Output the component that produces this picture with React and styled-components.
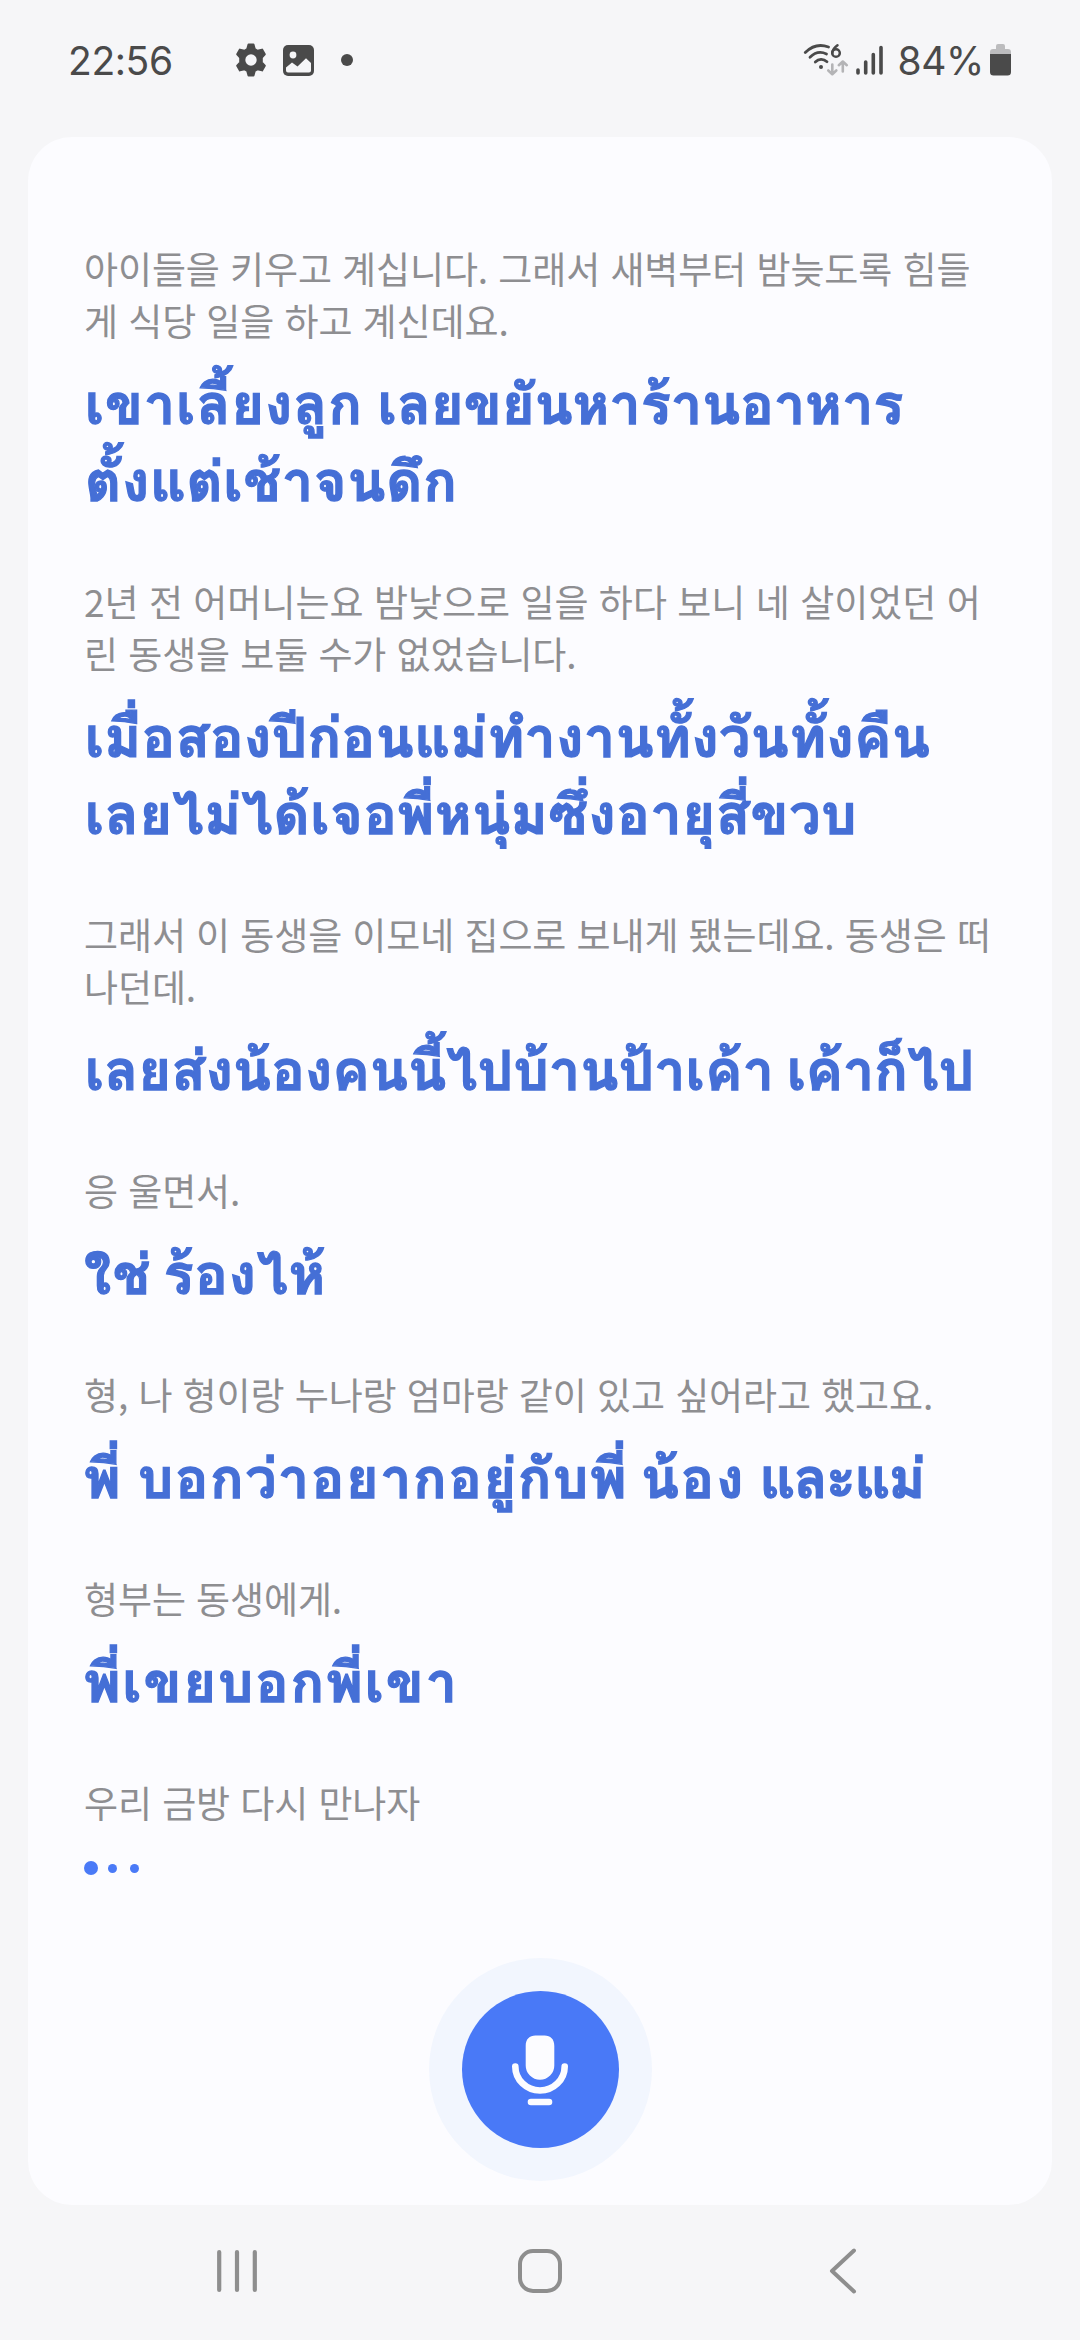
import React from 'react';
import styled, { createGlobalStyle } from 'styled-components';

const GlobalStyle = createGlobalStyle`
  * {
    box-sizing: border-box;
  }

  body {
    margin: 0;
    background: #f6f6f8;
  }
`;

const Screen = styled.div`
  display: flex;
  flex-direction: column;
  width: 1080px;
  height: 2340px;
  background: #f6f6f8;
  overflow: hidden;
`;

const StatusBar = styled.header`
  display: flex;
  align-items: center;
  height: 137px;
  padding: 0 69px 17px 68px;
  color: #4a4a4a;
  font-family: Inter, sans-serif;
  font-size: 39px;
  font-weight: 370;
`;

const Clock = styled.span`
  width: 165px;
  letter-spacing: -0.4px;
`;

const StatusIcons = styled.div`
  display: flex;
  align-items: center;
  flex: 1;
`;

const NotificationDot = styled.span`
  width: 12px;
  height: 12px;
  margin-left: 27px;
  border-radius: 50%;
  background: #4a4a4a;
`;

const IconSlot = styled.span`
  display: flex;
  margin-left: ${({ $left }) => $left || 0}px;
`;

const Battery = styled.span`
  margin: 0 6px 0 14px;
  letter-spacing: -0.4px;
`;

const Card = styled.main`
  display: flex;
  flex-direction: column;
  height: 2068px;
  margin: 0 28px;
  padding: 105px 56px 0;
  border-radius: 44px;
  background: #fcfcff;
`;

const Transcript = styled.div`
  display: flex;
  flex-direction: column;
  gap: 55px;
  height: 1716px;
`;

const Source = styled.p`
  margin: 0 0 20px;
  color: #8e8e91;
  font-family: 'Noto Sans CJK KR', sans-serif;
  font-size: 37px;
  line-height: 52px;
  white-space: nowrap;
`;

const Translation = styled.p`
  margin: 0;
  padding-left: ${({ $indent }) => $indent || 0}px;
  color: #456fd6;
  font-family: Loma, 'Noto Sans Thai Looped', sans-serif;
  font-size: 55.5px;
  font-weight: 700;
  line-height: 77px;
  white-space: pre;
  -webkit-text-stroke: 1.3px #456fd6;
`;

const Line = styled.span`
  display: block;
  letter-spacing: ${({ $spacing }) => $spacing || 0}px;
`;

const Phrase = styled.span`
  letter-spacing: ${({ $spacing }) => $spacing || 0}px;
  word-spacing: ${({ $gap }) => $gap || 0}px;
`;

const Typing = styled.div`
  display: flex;
  align-items: center;
  height: 14px;
  margin-top: 33px;
`;

const Dot = styled.span`
  width: ${({ $size }) => $size}px;
  height: ${({ $size }) => $size}px;
  margin-right: ${({ $gap }) => $gap || 0}px;
  border-radius: 50%;
  background: #4a7af7;
`;

const MicHalo = styled.div`
  display: flex;
  align-items: center;
  justify-content: center;
  align-self: center;
  flex: none;
  width: 223px;
  height: 223px;
  border-radius: 50%;
  background: #f2f6fe;
`;

const MicButton = styled.button`
  display: flex;
  align-items: center;
  justify-content: center;
  width: 157px;
  height: 157px;
  padding: 0;
  border: 0;
  border-radius: 50%;
  background: #4979f7;
`;

const NavBar = styled.nav`
  display: flex;
  align-items: center;
  justify-content: space-between;
  height: 135px;
  padding: 0 212px 3px;
`;

const entries = [
  {
    source: [
      { text: '아이들을 키우고 계십니다. 그래서 새벽부터 밤늦도록 힘들', spacing: -0.1 },
      { text: '게 식당 일을 하고 계신데요.', spacing: -0.1 },
    ],
    indent: 1,
    translation: [
      [
        { text: 'เขาเลี้ยงลูก', spacing: 1.1 },
        { text: ' เลยขยันหาร้านอาหาร', spacing: 0.2, gap: -4 },
      ],
      [{ text: 'ตั้งแต่เช้าจนดึก', spacing: 0.9 }],
    ],
  },
  {
    source: [
      { text: '2년 전 어머니는요 밤낮으로 일을 하다 보니 네 살이었던 어', spacing: 0 },
      { text: '린 동생을 보둘 수가 없었습니다.', spacing: -0.1 },
    ],
    indent: 1,
    translation: [
      [{ text: 'เมื่อสองปีก่อนแม่ทำงานทั้งวันทั้งคืน', spacing: 0.6 }],
      [{ text: 'เลยไม่ได้เจอพี่หนุ่มซึ่งอายุสี่ขวบ', spacing: 0.8 }],
    ],
  },
  {
    source: [
      { text: '그래서 이 동생을 이모네 집으로 보내게 됐는데요. 동생은 떠', spacing: -0.1 },
      { text: '나던데.', spacing: -0.1 },
    ],
    indent: 1,
    translation: [
      [
        { text: 'เลยส่งน้องคนนี้ไปบ้านป้าเค้า', spacing: 0.35 },
        { text: ' เค้าก็ไป', spacing: 0, gap: -6 },
      ],
    ],
  },
  {
    source: [{ text: '응 울면서.', spacing: -0.1 }],
    translation: [
      [
        { text: 'ใช่', spacing: 1.6 },
        { text: ' ร้องไห้', spacing: 1, gap: -8 },
      ],
    ],
  },
  {
    source: [{ text: '형, 나 형이랑 누나랑 엄마랑 같이 있고 싶어라고 했고요.', spacing: -0.1 }],
    translation: [
      [
        { text: 'พี่', spacing: 1 },
        { text: ' บอกว่าอยากอยู่กับพี่', spacing: 1.7, gap: -4 },
        { text: ' น้อง', spacing: 2, gap: -8 },
        { text: ' และแม่', spacing: -1.5, gap: -3 },
      ],
    ],
  },
  {
    source: [{ text: '형부는 동생에게.', spacing: -0.1 }],
    translation: [[{ text: 'พี่เขยบอกพี่เขา', spacing: 2 }]],
  },
  {
    source: [{ text: '우리 금방 다시 만나자', spacing: -0.1 }],
    translation: [],
  },
];

const GearIcon = () => (
  <svg width="32" height="34" viewBox="0 0 32 34" fill="none">
    <path
      d="M13.500 1.500h5l1.300 4.700 2.800 1.600 4.500-1.200 2.700 4.700-3 3.300v4.800l3 3.300-2.700 4.700-4.500-1.200-2.800 1.600-1.300 4.700h-5l-1.300-4.700-2.800-1.600-4.500 1.200-2.700-4.700 3-3.300v-4.800l-3-3.300 2.700-4.700 4.500 1.200 2.800-1.600z"
      fill="#4a4a4a"
      stroke="#4a4a4a"
      strokeWidth="2"
      strokeLinejoin="round"
    />
    <circle cx="16" cy="17" r="5.700" fill="#f6f6f8" />
  </svg>
);

const ImageIcon = () => (
  <svg width="31" height="31" viewBox="0 0 31 31">
    <rect width="31" height="31" rx="5" fill="#4a4a4a" />
    <circle cx="10" cy="10" r="3.400" fill="#f6f6f8" />
    <path
      d="M3 22.500l6-5 5.500 4 8.500-8.300 5 4.800v7.500a2 2 0 0 1-2 2H5a2 2 0 0 1-2-2z"
      fill="#f6f6f8"
    />
  </svg>
);

const WifiIcon = () => (
  <svg width="46" height="34" viewBox="0 0 46 34" fill="none">
    <g stroke="#4a4a4a" strokeWidth="2.800" strokeLinecap="round">
      <path d="M2.300 9.500C9 2.800 17.500 1 25.500 4" />
      <path d="M7 14.200C12 9.300 18 8.300 23.500 11" />
      <path d="M12.300 19c3.400-3.300 8-3.500 11.700-.3" />
      <path d="M34.500 2.300c-2.800 2-5.200 4.700-5.200 7.700" strokeWidth="2.500" />
      <circle cx="33" cy="10" r="3.800" strokeWidth="2.500" />
    </g>
    <circle cx="18" cy="24" r="2" fill="#4a4a4a" />
    <g stroke="#b4b4b6" strokeWidth="2.600" strokeLinecap="round" strokeLinejoin="round">
      <path d="M29.300 21.500v9M25.300 27.500l4 3.700 4-3.700" />
      <path d="M39.800 28.500v-9M35.800 22.200l4-3.700 4 3.700" />
    </g>
  </svg>
);

const SignalIcon = () => (
  <svg width="28" height="31" viewBox="0 0 28 31" stroke="#4a4a4a" strokeWidth="3.600" strokeLinecap="round">
    <path d="M2 25v3M9.700 17v11M17.300 9.500V28M25 2.500V28" />
  </svg>
);

const BatteryIcon = () => (
  <svg width="21" height="32" viewBox="0 0 21 32">
    <path
      d="M6 2a2 2 0 0 1 2-2h5a2 2 0 0 1 2 2v3h3a3 3 0 0 1 3 3v3H0V8a3 3 0 0 1 3-3h3z"
      fill="#bcbcbe"
    />
    <path d="M0 10h21v18a3.500 3.500 0 0 1-3.500 3.500h-14A3.500 3.500 0 0 1 0 28z" fill="#4a4a4a" />
  </svg>
);

const MicIcon = () => (
  <svg width="58" height="72" viewBox="0 0 58 72" fill="none">
    <path
      d="M14.700 12c0-7 3.800-10.500 9.800-10.500h9c6 0 9.800 3.500 9.800 10.500v19.500a14.300 14.300 0 0 1-28.600 0z"
      fill="#fcfcff"
    />
    <path
      d="M4.300 32.500a24.700 24 0 0 0 49.400 0M20 68h18"
      stroke="#fcfcff"
      strokeWidth="6.600"
      strokeLinecap="round"
    />
  </svg>
);

const RecentsIcon = () => (
  <svg width="50" height="48" viewBox="0 0 50 48" stroke="#8e8e8e" strokeWidth="4.200" strokeLinecap="round">
    <path d="M7.200 5v38M25 5v38M42.800 5v38" />
  </svg>
);

const HomeIcon = () => (
  <svg width="48" height="48" viewBox="0 0 48 48" fill="none">
    <rect x="4" y="4" width="40" height="40" rx="13" stroke="#8e8e8e" strokeWidth="4" />
  </svg>
);

const BackIcon = () => (
  <svg width="50" height="50" viewBox="0 0 50 50" fill="none">
    <path d="M36 4.500L14 25l22 20.500" stroke="#8e8e8e" strokeWidth="4" strokeLinecap="round" strokeLinejoin="round" />
  </svg>
);

const App = () => {
  return (
    <>
      <GlobalStyle />
      <Screen>
        <StatusBar>
          <Clock>22:56</Clock>
          <StatusIcons>
            <IconSlot $left={1.5}>
              <GearIcon />
            </IconSlot>
            <IconSlot $left={16.5}>
              <ImageIcon />
            </IconSlot>
            <NotificationDot />
          </StatusIcons>
          <WifiIcon />
          <IconSlot $left={7}>
            <SignalIcon />
          </IconSlot>
          <Battery>84%</Battery>
          <BatteryIcon />
        </StatusBar>
        <Card>
          <Transcript>
            {entries.map((entry) => (
              <section key={entry.source[0].text}>
                <Source lang="ko">
                  {entry.source.map((line) => (
                    <Line key={line.text} $spacing={line.spacing}>
                      {line.text}
                    </Line>
                  ))}
                </Source>
                {entry.translation.length > 0 ? (
                  <Translation lang="th" $indent={entry.indent}>
                    {entry.translation.map((line) => (
                      <Line key={line[0].text}>
                        {line.map((phrase) => (
                          <Phrase key={phrase.text} $spacing={phrase.spacing} $gap={phrase.gap}>
                            {phrase.text}
                          </Phrase>
                        ))}
                      </Line>
                    ))}
                  </Translation>
                ) : (
                  <Typing>
                    <Dot $size={14} $gap={10} />
                    <Dot $size={9} $gap={13} />
                    <Dot $size={9} />
                  </Typing>
                )}
              </section>
            ))}
          </Transcript>
          <MicHalo>
            <MicButton aria-label="Speak">
              <MicIcon />
            </MicButton>
          </MicHalo>
        </Card>
        <NavBar>
          <RecentsIcon />
          <HomeIcon />
          <BackIcon />
        </NavBar>
      </Screen>
    </>
  );
};

export default App;
